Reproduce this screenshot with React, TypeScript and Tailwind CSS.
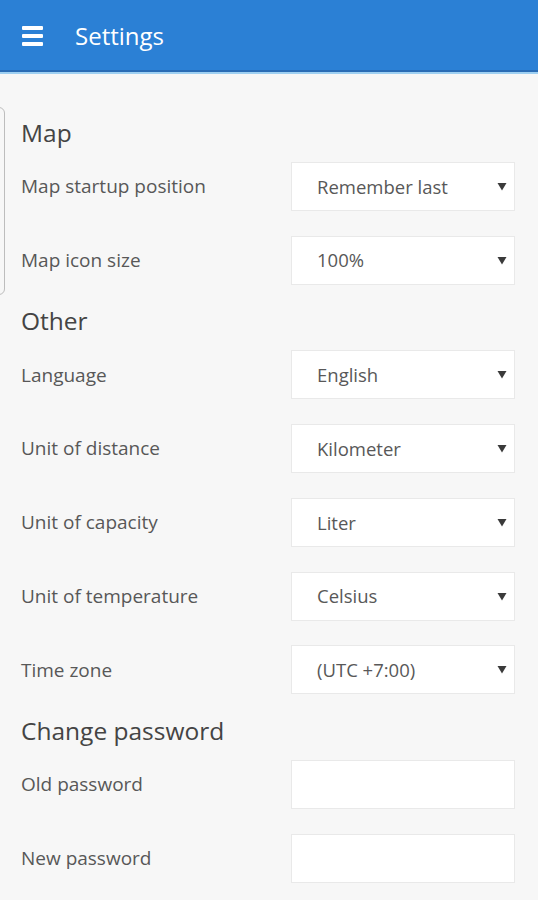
import React from 'react';

const font = { fontFamily: '"Open Sans", "Noto Sans", sans-serif' };

function Caret() {
  return (
    <svg width="10" height="9" viewBox="0 0 10 9" className="shrink-0">
      <path d="M0.5 1 L9.5 1 L5 8.5 Z" fill="#3a3a3a" />
    </svg>
  );
}

function SelectRow({ label, value }: { label: string; value: string }) {
  return (
    <div className="flex h-[49px] items-center justify-between">
      <span className="text-[19px] text-[#585858]">{label}</span>
      <div className="flex h-[49px] w-[224px] items-center justify-between border border-[#e9e9e9] bg-white pl-[25px] pr-[7px]">
        <span className="text-[18.5px] text-[#585858]">{value}</span>
        <Caret />
      </div>
    </div>
  );
}

function InputRow({ label }: { label: string }) {
  return (
    <div className="flex h-[49px] items-center justify-between">
      <span className="text-[19px] text-[#585858]">{label}</span>
      <input
        type="password"
        className="h-[49px] w-[224px] border border-[#e9e9e9] bg-white px-3 outline-none"
      />
    </div>
  );
}

function Section({ title, children }: { title: string; children: React.ReactNode }) {
  return (
    <section className="mb-[18.5px]">
      <h2 className="mb-[11px] h-[36px] text-[24.5px] leading-[36px] text-[#444]">{title}</h2>
      <div className="flex flex-col gap-[24.8px]">{children}</div>
    </section>
  );
}

export default function App() {
  return (
    <div className="relative min-h-[900px] overflow-hidden bg-[#f7f7f7]" style={font}>
      {/* header */}
      <header className="flex h-[74px] items-center border-b-2 border-[#9fd0f2] bg-[#2b80d5] shadow-[inset_0_-2px_0_#2a6cb5]">
        <div className="ml-[22px] flex w-[21px] flex-col gap-[4px]">
          <span className="h-[4px] rounded-[1px] bg-white" />
          <span className="h-[4px] rounded-[1px] bg-white" />
          <span className="h-[4px] rounded-[1px] bg-white" />
        </div>
        <h1 className="ml-[32px] text-[24px] text-white">Settings</h1>
      </header>

      {/* edge of a drawer panel peeking from the left */}
      <div className="absolute left-[-20px] top-[107px] h-[188px] w-[25px] rounded-md border border-[#bdbdbd]" />

      <main className="px-[21px] pr-[23px] pt-[41px]">
        <Section title="Map">
          <SelectRow label="Map startup position" value="Remember last" />
          <SelectRow label="Map icon size" value="100%" />
        </Section>
        <Section title="Other">
          <SelectRow label="Language" value="English" />
          <SelectRow label="Unit of distance" value="Kilometer" />
          <SelectRow label="Unit of capacity" value="Liter" />
          <SelectRow label="Unit of temperature" value="Celsius" />
          <SelectRow label="Time zone" value="(UTC +7:00)" />
        </Section>
        <Section title="Change password">
          <InputRow label="Old password" />
          <InputRow label="New password" />
        </Section>
      </main>
    </div>
  );
}
